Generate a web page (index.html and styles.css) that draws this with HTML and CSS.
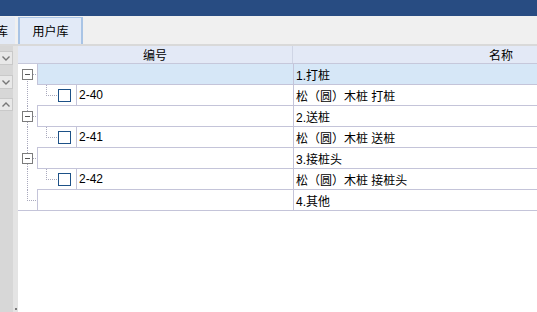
FILE: index.html
```html
<!DOCTYPE html>
<html lang="zh">
<head>
<meta charset="utf-8">
<link rel="stylesheet" href="styles.css">
</head>
<body>
<div class="app">
  <div class="titlebar"></div>
  <div class="tabbar">
    <div class="tab tab-cut"><span class="tab-cut-text">库</span></div>
    <div class="tab tab-active">用户库</div>
  </div>
  <div class="divider"></div>
  <div class="main">
    <div class="side">
      <div class="navbtn nb1"><svg width="8" height="5" viewBox="0 0 8 5"><polyline points="0.5,0.5 4,4 7.5,0.5" fill="none" stroke="#777" stroke-width="1.4"/></svg></div>
      <div class="navbtn nb2"><svg width="8" height="5" viewBox="0 0 8 5"><polyline points="0.5,0.5 4,4 7.5,0.5" fill="none" stroke="#777" stroke-width="1.4"/></svg></div>
      <div class="navbtn nb3"><svg width="8" height="5" viewBox="0 0 8 5"><polyline points="0.5,4.5 4,1 7.5,4.5" fill="none" stroke="#777" stroke-width="1.4"/></svg></div>
      <div class="grip"></div>
    </div>
    <div class="grid">
      <div class="grid-head">
        <div class="hcell hc1">编号</div>
        <div class="hcell hc2">名称</div>
      </div>
      <div class="grid-body">
        <div class="row parent first selected">
          <div class="gutter"><span class="expander"><span class="minus"></span></span></div>
          <div class="rmain">
            <div class="cell c1"></div>
            <div class="cell c2">1.打桩</div>
          </div>
        </div>
        <div class="row child">
          <div class="gutter"></div>
          <div class="rmain">
            <div class="link"><span class="check"></span></div>
            <div class="cell c1 bordered">2-40</div>
            <div class="cell c2">松（圆）木桩 打桩</div>
          </div>
        </div>
        <div class="row parent">
          <div class="gutter"><span class="expander"><span class="minus"></span></span></div>
          <div class="rmain">
            <div class="cell c1"></div>
            <div class="cell c2">2.送桩</div>
          </div>
        </div>
        <div class="row child">
          <div class="gutter"></div>
          <div class="rmain">
            <div class="link"><span class="check"></span></div>
            <div class="cell c1 bordered">2-41</div>
            <div class="cell c2">松（圆）木桩 送桩</div>
          </div>
        </div>
        <div class="row parent">
          <div class="gutter"><span class="expander"><span class="minus"></span></span></div>
          <div class="rmain">
            <div class="cell c1"></div>
            <div class="cell c2">3.接桩头</div>
          </div>
        </div>
        <div class="row child">
          <div class="gutter"></div>
          <div class="rmain">
            <div class="link"><span class="check"></span></div>
            <div class="cell c1 bordered">2-42</div>
            <div class="cell c2">松（圆）木桩 接桩头</div>
          </div>
        </div>
        <div class="row parent last">
          <div class="gutter"></div>
          <div class="rmain">
            <div class="cell c1"></div>
            <div class="cell c2">4.其他</div>
          </div>
        </div>
      </div>
    </div>
  </div>
</div>
</body>
</html>
```

FILE: styles.css
```css
html, body {
  margin: 0;
  padding: 0;
}
body {
  width: 537px;
  height: 312px;
  overflow: hidden;
  background: #ffffff;
  font-family: "Liberation Sans", "Noto Sans CJK SC", sans-serif;
  font-size: 12px;
  color: #000;
}
.app {
  display: flex;
  flex-direction: column;
  height: 312px;
}
.titlebar {
  height: 16px;
  background: #284c82;
  flex: none;
}
.tabbar {
  height: 28px;
  background: #f0f0f0;
  display: flex;
  align-items: stretch;
  flex: none;
}
.tab {
  box-sizing: border-box;
  display: flex;
  align-items: center;
  justify-content: center;
  margin-top: 1px;
}
.tab-cut {
  width: 15px;
  background: #e3eaf6;
  overflow: hidden;
  justify-content: flex-end;
}
.tab-cut-text {
  margin-right: 7px;
  flex: none;
}
.tab-active {
  margin-left: 3px;
  width: 65px;
  background: #e2eaf7;
  border: 2px solid #a9c4e5;
  border-top-width: 1px;
  border-bottom: none;
  padding-bottom: 1px;
}
.divider {
  height: 2px;
  background: #d9d9d9;
  flex: none;
}
.main {
  flex: 1;
  display: flex;
  min-height: 0;
}
.side {
  width: 18px;
  flex: none;
  display: flex;
  flex-direction: column;
  background: linear-gradient(to right, #d7d7d7 13px, #e4e4e4 13px);
}
.navbtn {
  box-sizing: border-box;
  width: 13px;
  height: 14px;
  background: #e8e8e8;
  border: 1px solid #c9c9c9;
  border-left: none;
  display: flex;
  align-items: center;
  justify-content: center;
}
.nb1 { margin-top: 5px; }
.nb2 { margin-top: 10px; }
.nb3 { margin-top: 9px; height: 13px; }
.grip {
  margin-top: auto;
  margin-left: 15px;
  margin-bottom: 2px;
  width: 2px;
  height: 2px;
  background: #7a7a7a;
}
.grid {
  flex: 1;
  overflow: hidden;
  min-width: 0;
}
.grid-head {
  display: flex;
  height: 18px;
  box-sizing: border-box;
  background: #e3e9f6;
  border-bottom: 1px solid #c6c8db;
  width: 691px;
}
.hcell {
  display: flex;
  align-items: center;
  justify-content: center;
  box-sizing: border-box;
  flex: none;
}
.hc1 {
  width: 275px;
  border-right: 1px solid #cfd5e5;
}
.hc2 {
  width: 416px;
}
.grid-body {
  width: 691px;
}
.row {
  display: flex;
  height: 21px;
}
.gutter {
  width: 19px;
  flex: none;
  box-sizing: border-box;
  display: flex;
  align-items: center;
  justify-content: center;
  background:
    repeating-linear-gradient(to bottom, #a9a9bd 0 1px, transparent 1px 2px) 9px 0 / 1px 100% no-repeat;
}
.row.parent .gutter {
  background:
    repeating-linear-gradient(to bottom, #a9a9bd 0 1px, transparent 1px 2px) 9px 0 / 1px 100% no-repeat,
    repeating-linear-gradient(to right, #a9a9bd 0 1px, transparent 1px 2px) 9px 50% / 10px 1px no-repeat;
}
.row.first .gutter {
  background:
    repeating-linear-gradient(to bottom, #a9a9bd 0 1px, transparent 1px 2px) 9px 100% / 1px 50% no-repeat,
    repeating-linear-gradient(to right, #a9a9bd 0 1px, transparent 1px 2px) 9px 50% / 10px 1px no-repeat;
}
.row.last .gutter {
  border-bottom: 1px solid #c4c4d9;
  background:
    repeating-linear-gradient(to bottom, #a9a9bd 0 1px, transparent 1px 2px) 9px 0 / 1px 50% no-repeat,
    repeating-linear-gradient(to right, #a9a9bd 0 1px, transparent 1px 2px) 9px 50% / 10px 1px no-repeat;
}
.expander {
  box-sizing: border-box;
  width: 11px;
  height: 11px;
  border: 1px solid #7c7c7c;
  background: #fff;
  display: flex;
  align-items: center;
  justify-content: center;
}
.minus {
  width: 5px;
  height: 1px;
  background: #555;
}
.rmain {
  display: flex;
  box-sizing: border-box;
  border-bottom: 1px solid #c4c4d9;
  flex: none;
  width: 672px;
}
.row.parent .rmain {
  border-left: 1px solid #c4c4d9;
}
.row.selected .rmain {
  background: #d6e7f7;
}
.cell {
  box-sizing: border-box;
  display: flex;
  align-items: center;
  flex: none;
  white-space: nowrap;
}
.row.parent .c1 {
  width: 255px;
}
.c1.bordered {
  width: 217px;
  border-left: 1px solid #c4c4d9;
  padding-left: 2px;
}
.c2 {
  width: 416px;
  border-left: 1px solid #c4c4d9;
  padding-left: 2px;
}
.link {
  width: 39px;
  flex: none;
  box-sizing: border-box;
  display: flex;
  align-items: center;
  padding-left: 21px;
  background:
    repeating-linear-gradient(to bottom, #a9a9bd 0 1px, transparent 1px 2px) 9px 0 / 1px 50% no-repeat,
    repeating-linear-gradient(to right, #a9a9bd 0 1px, transparent 1px 2px) 9px 50% / 12px 1px no-repeat;
}
.check {
  box-sizing: border-box;
  width: 13px;
  height: 13px;
  border: 1px solid #1d5187;
  background: #fff;
}
```
